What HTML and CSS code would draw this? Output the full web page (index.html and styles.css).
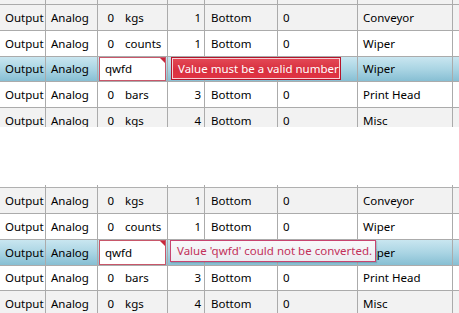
FILE: index.html
```html
<!DOCTYPE html>
<html>
<head>
<meta charset="utf-8">
<link rel="stylesheet" href="styles.css">
</head>
<body>
<div class="panel panel-top">
  <div class="row stub gray"><div class="c"></div><div class="c"></div><div class="c"></div><div class="c"></div><div class="c"></div><div class="c"></div><div class="c"></div><div class="c last"></div></div>
  <div class="row gray h26"><div class="c">Output</div><div class="c">Analog</div><div class="c val"><span class="num">0</span><span class="unit">kgs</span></div><div class="c right">1</div><div class="c pos">Bottom</div><div class="c">0</div><div class="c">Conveyor</div><div class="c last"></div></div>
  <div class="row white h26"><div class="c">Output</div><div class="c">Analog</div><div class="c val"><span class="num">0</span><span class="unit">counts</span></div><div class="c right">1</div><div class="c pos">Bottom</div><div class="c">0</div><div class="c">Wiper</div><div class="c last"></div></div>
  <div class="row sel h25"><div class="c">Output</div><div class="c">Analog</div><div class="c edit"><div class="textbox">qwfd<span class="flag"></span></div><div class="tip tip-red">Value must be a valid number</div></div><div class="c right"></div><div class="c pos"></div><div class="c"></div><div class="c">Wiper</div><div class="c last"></div></div>
  <div class="row white h26"><div class="c">Output</div><div class="c">Analog</div><div class="c val"><span class="num">0</span><span class="unit">bars</span></div><div class="c right">3</div><div class="c pos">Bottom</div><div class="c">0</div><div class="c">Print Head</div><div class="c last"></div></div>
  <div class="row gray h26"><div class="c">Output</div><div class="c">Analog</div><div class="c val"><span class="num">0</span><span class="unit">kgs</span></div><div class="c right">4</div><div class="c pos">Bottom</div><div class="c">0</div><div class="c">Misc</div><div class="c last"></div></div>
</div>
<div class="panel panel-bottom">
  <div class="row stub3 white"><div class="c"></div><div class="c"></div><div class="c"></div><div class="c"></div><div class="c"></div><div class="c"></div><div class="c"></div><div class="c last"></div></div>
  <div class="row gray h26"><div class="c">Output</div><div class="c">Analog</div><div class="c val"><span class="num">0</span><span class="unit">kgs</span></div><div class="c right">1</div><div class="c pos">Bottom</div><div class="c">0</div><div class="c">Conveyor</div><div class="c last"></div></div>
  <div class="row white h26"><div class="c">Output</div><div class="c">Analog</div><div class="c val"><span class="num">0</span><span class="unit">counts</span></div><div class="c right">1</div><div class="c pos">Bottom</div><div class="c">0</div><div class="c">Wiper</div><div class="c last"></div></div>
  <div class="row sel h26"><div class="c">Output</div><div class="c">Analog</div><div class="c edit"><div class="textbox">qwfd<span class="flag"></span></div><div class="tip tip-light">Value 'qwfd' could not be converted.</div></div><div class="c right"></div><div class="c pos"></div><div class="c"></div><div class="c">Wiper</div><div class="c last"></div></div>
  <div class="row white h25"><div class="c">Output</div><div class="c">Analog</div><div class="c val"><span class="num">0</span><span class="unit">bars</span></div><div class="c right">3</div><div class="c pos">Bottom</div><div class="c">0</div><div class="c">Print Head</div><div class="c last"></div></div>
  <div class="row gray h26"><div class="c">Output</div><div class="c">Analog</div><div class="c val"><span class="num">0</span><span class="unit">kgs</span></div><div class="c right">4</div><div class="c pos">Bottom</div><div class="c">0</div><div class="c">Misc</div><div class="c last"></div></div>
</div>
</body>
</html>
```
FILE: styles.css
```css
html, body {
  margin: 0;
  padding: 0;
  background: #ffffff;
}
body {
  width: 459px;
  height: 313px;
  overflow: hidden;
  font-family: "Noto Sans", "Open Sans", sans-serif;
  font-size: 11.5px;
  color: #000;
}
.panel {
  overflow: hidden;
}
.panel-top {
  height: 127px;
}
.panel-bottom {
  margin-top: 58px;
  height: 128px;
}
.row {
  display: grid;
  grid-template-columns: 46px 52px 70px 37px 73px 80px 95px 1fr;
}
.stub { height: 5px; }
.stub3 { height: 3px; }
.h26 { height: 26px; }
.h25 { height: 25px; }
.gray { background: #f2f2f2; }
.white { background: #ffffff; }
.sel {
  background: linear-gradient(to bottom, #c9e6f0 0%, #a9d4e3 50%, #84bdd2 100%);
}
.c {
  box-sizing: border-box;
  border-right: 1px solid #ababab;
  border-bottom: 1px solid #ababab;
  padding: 0 4px 0 5px;
  display: flex;
  align-items: center;
  white-space: nowrap;
  line-height: 1;
}
.stub3 .c {
  border-bottom-color: #b0b0b0;
}
.c.last {
  border-right: none;
}
.right {
  justify-content: flex-end;
  padding-right: 3px;
}
.pos {
  padding-left: 6px;
}
.val {
  padding: 0;
}
.num {
  width: 16px;
  text-align: right;
}
.unit {
  margin-left: 11px;
}
.edit {
  position: relative;
  padding: 0 1px 0 1px;
  align-items: stretch;
}
.textbox {
  position: relative;
  flex: 1;
  box-sizing: border-box;
  background: #ffffff;
  border: 1px solid #c8576a;
  padding-left: 5px;
  display: flex;
  align-items: center;
  color: #000;
}
.flag {
  position: absolute;
  top: 0;
  right: 0;
  width: 0;
  height: 0;
  border-top: 5px solid #c8283c;
  border-left: 5px solid transparent;
}
.tip {
  position: absolute;
  top: 0;
  left: 73px;
  height: 23px;
  box-sizing: border-box;
  display: flex;
  align-items: center;
  white-space: nowrap;
  z-index: 2;
}
.tip-red {
  width: 170px;
  color: #ffffff;
  background: linear-gradient(to bottom, #e44a57 0%, #d8303f 55%, #e23444 100%);
  border: 1px solid #b5142a;
  box-shadow: inset 0 0 0 1px #f7d0d5;
  padding-left: 6px;
}
.tip-light {
  width: 206px;
  top: 0;
  left: 72px;
  height: 22px;
  color: #c2305a;
  background: linear-gradient(to bottom, #f8f8fa 0%, #ececf0 100%);
  border: 1px solid #c84470;
  padding-left: 6px;
  box-shadow: 1px 1px 1px rgba(0,0,0,0.15);
}
```
